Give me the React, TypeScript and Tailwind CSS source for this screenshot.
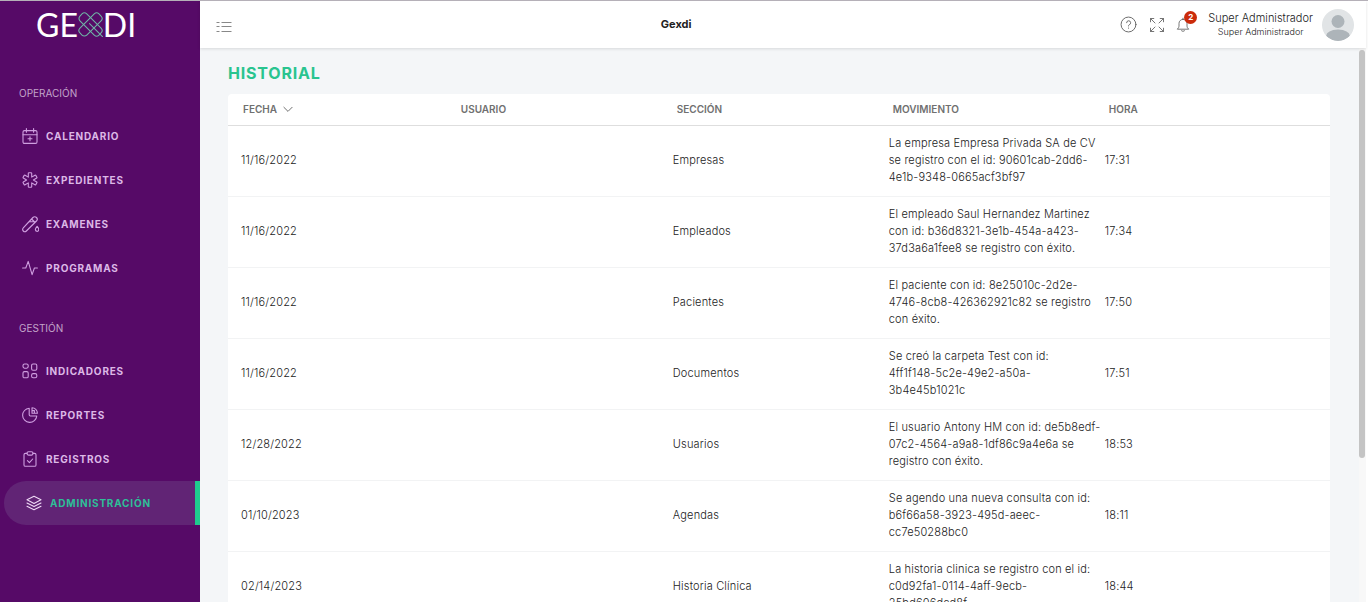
import { useState } from 'react'
import type { ReactNode } from 'react'
import clsx from 'clsx'

interface IconProps {
  children: ReactNode
  className?: string
}

function Icon({ children, className = 'size-4' }: IconProps) {
  return (
    <svg
      viewBox="0 0 16 16"
      fill="none"
      stroke="currentColor"
      strokeWidth="1.1"
      strokeLinecap="round"
      strokeLinejoin="round"
      className={clsx('shrink-0', className)}
      aria-hidden="true"
    >
      {children}
    </svg>
  )
}

const icons = {
  calendar: (
    <Icon>
      <rect x="1" y="2.6" width="14" height="12.8" rx="1.4" />
      <path d="M1 6.8h14M4.4.6v3.6M11.6.6v3.6M8 8.8v4M6 10.8h4" />
    </Icon>
  ),
  medical: (
    <Icon>
      <path d="M6.9.7h2.2q.6 0 .6.6v3.8l3.2-1.9q.6-.3.9.2l1.1 1.8q.3.5-.2.8L11.4 8l3.3 1.9q.5.3.2.8l-1.1 1.9q-.3.5-.9.2l-3.2-1.9v3.8q0 .6-.6.6H6.9q-.6 0-.6-.6v-3.8l-3.2 1.9q-.6.3-.9-.2l-1.1-1.8q-.3-.5.2-.8L4.6 8 1.3 6.1q-.5-.3-.2-.8l1.1-1.9q.3-.5.9-.2l3.2 1.9V1.3q0-.6.6-.6z" />
    </Icon>
  ),
  tube: (
    <Icon className="size-[17px]">
      <path d="M10.3 1.4 1.2 11.2a2 2 0 0 0 2.9 2.9l9.5-9.4a2.3 2.3 0 0 0-3.3-3.3zM9 2.8l3.1 3.1M6.8 5.4h5.6" />
      <path d="M14.2 9.8s-1.6 1.8-1.6 3a1.6 1.6 0 0 0 3.2 0c0-1.2-1.6-3-1.6-3z" />
    </Icon>
  ),
  pulse: (
    <Icon>
      <path d="M.6 8h3.2l2.4-6.6 3.9 13.2L12.4 8h3" />
    </Icon>
  ),
  grid: (
    <Icon>
      <rect x="1" y="1" width="5.2" height="4.2" rx="1.6" />
      <rect x="9.6" y="1" width="5.2" height="6.2" rx="1.4" />
      <rect x="1" y="8.6" width="5.2" height="6.2" rx="1.4" />
      <rect x="9.6" y="10.6" width="5.2" height="4.2" rx="1.6" />
    </Icon>
  ),
  pie: (
    <Icon>
      <path d="M7.2 1.2A7.1 7.1 0 1 0 14.8 9H8.4a1.2 1.2 0 0 1-1.2-1.2z" />
      <path d="M10 .8v5.4h5.4C15.4 3 13 .8 10 .8zM10 3.6h2.4v2.6" />
    </Icon>
  ),
  clipboard: (
    <Icon>
      <path d="M5 2.4H3.4A1.4 1.4 0 0 0 2 3.8v10.1a1.4 1.4 0 0 0 1.4 1.4h9.2a1.4 1.4 0 0 0 1.4-1.4V3.8a1.4 1.4 0 0 0-1.4-1.4H11" />
      <rect x="5" y=".7" width="6" height="3.4" rx="1.5" />
      <path d="m5.4 9.6 2 2 3.3-3.6" />
    </Icon>
  ),
  layers: (
    <Icon>
      <path d="M8 1.2 15 4.8 8 8.4 1 4.8z" />
      <path d="m1 8 7 3.6L15 8M1 11.2l7 3.6 7-3.6" />
    </Icon>
  ),
}

const menu = [
  {
    title: 'Operación',
    items: [
      { label: 'Calendario', icon: icons.calendar },
      { label: 'Expedientes', icon: icons.medical },
      { label: 'Examenes', icon: icons.tube },
      { label: 'Programas', icon: icons.pulse },
    ],
  },
  {
    title: 'Gestión',
    items: [
      { label: 'Indicadores', icon: icons.grid },
      { label: 'Reportes', icon: icons.pie },
      { label: 'Registros', icon: icons.clipboard },
      { label: 'Administración', icon: icons.layers },
    ],
  },
]

const rows = [
  {
    fecha: '11/16/2022',
    usuario: '',
    seccion: 'Empresas',
    movimiento:
      'La empresa Empresa Privada SA de CV se registro con el id: 90601cab-2dd6-4e1b-9348-0665acf3bf97',
    hora: '17:31',
  },
  {
    fecha: '11/16/2022',
    usuario: '',
    seccion: 'Empleados',
    movimiento:
      'El empleado Saul Hernandez Martinez con id: b36d8321-3e1b-454a-a423-37d3a6a1fee8 se registro con éxito.',
    hora: '17:34',
  },
  {
    fecha: '11/16/2022',
    usuario: '',
    seccion: 'Pacientes',
    movimiento:
      'El paciente con id: 8e25010c-2d2e-4746-8cb8-426362921c82 se registro con éxito.',
    hora: '17:50',
  },
  {
    fecha: '11/16/2022',
    usuario: '',
    seccion: 'Documentos',
    movimiento: 'Se creó la carpeta Test con id:\n4ff1f148-5c2e-49e2-a50a-3b4e45b1021c',
    hora: '17:51',
  },
  {
    fecha: '12/28/2022',
    usuario: '',
    seccion: 'Usuarios',
    movimiento:
      'El usuario Antony HM con id: de5b8edf-07c2-4564-a9a8-1df86c9a4e6a se registro con éxito.',
    hora: '18:53',
  },
  {
    fecha: '01/10/2023',
    usuario: '',
    seccion: 'Agendas',
    movimiento: 'Se agendo una nueva consulta con id: b6f66a58-3923-495d-aeec-cc7e50288bc0',
    hora: '18:11',
  },
  {
    fecha: '02/14/2023',
    usuario: '',
    seccion: 'Historia Clínica',
    movimiento:
      'La historia clinica se registro con el id: c0d92fa1-0114-4aff-9ecb-25bd606dcd8f',
    hora: '18:44',
  },
]

function Logo() {
  return (
    <a
      href="#inicio"
      aria-label="Gexdi"
      className="flex h-[47px] items-center pl-9 font-[Lato,sans-serif] text-[32px] leading-none text-white"
    >
      <span>GE</span>
      <svg
        viewBox="0 0 26 26"
        className="w-[25px]"
        fill="none"
        stroke="#6fb5a6"
        strokeWidth="1.1"
        strokeLinecap="round"
        aria-hidden="true"
      >
        <rect x="-1" y="8" width="28" height="10" rx="3.5" transform="rotate(-45 13 13)" />
        <rect x="-1" y="8" width="28" height="10" rx="3.5" transform="rotate(45 13 13)" />
        <path d="M12 12l13.5 13.5" />
      </svg>
      <span>DI</span>
    </a>
  )
}

function Sidebar() {
  const [active, setActive] = useState('Administración')

  return (
    <aside className="w-[200px] shrink-0 bg-[#560a67]">
      <Logo />
      <nav className="mt-[35px] flex flex-col gap-7">
        {menu.map(group => (
          <div key={group.title}>
            <h2 className="mb-[11px] pl-[19px] text-[10px] leading-5 text-[#c3a5ca] uppercase">
              {group.title}
            </h2>
            <ul>
              {group.items.map(item => {
                const isActive = item.label === active
                return (
                  <li key={item.label}>
                    <a
                      href="#menu"
                      onClick={() => setActive(item.label)}
                      className={clsx(
                        'flex h-11 items-center pl-[22px] text-[10px] font-bold tracking-[0.08em] uppercase',
                        isActive
                          ? 'ml-1 rounded-l-full border-r-[5px] border-[#1fcb8e] bg-[#612475] text-[#2ebf98]'
                          : 'text-[#dcb8e6]'
                      )}
                    >
                      <span
                        className={clsx(
                          'flex w-6 shrink-0',
                          isActive ? 'text-[#eed9f5]' : 'text-[#cf9fe0]'
                        )}
                      >
                        {item.icon}
                      </span>
                      {item.label}
                    </a>
                  </li>
                )
              })}
            </ul>
          </div>
        ))}
      </nav>
    </aside>
  )
}

function Header() {
  return (
    <header className="z-10 flex h-[47px] shrink-0 items-center justify-between bg-white pr-3 pl-4 shadow-[0_1px_3px_rgba(0,0,0,0.12)]">
      <button type="button" aria-label="Menú" className="pt-1 text-[#888]">
        <svg viewBox="0 0 16 16" className="size-4" stroke="currentColor" aria-hidden="true">
          <path d="M.5 3.5h3M5.5 3.5h10M.5 7.5h3M5.5 7.5h10M.5 12.5h3M5.5 12.5h10" />
        </svg>
      </button>
      <h1 className="text-[11px] font-bold text-[#222]">Gexdi</h1>
      <div className="flex items-center text-[#666]">
        <button type="button" aria-label="Ayuda" className="mr-3">
          <Icon className="size-[17px]">
            <circle cx="8" cy="8" r="7" strokeWidth=".9" />
            <path d="M6.2 6.3a1.9 1.9 0 1 1 2.5 1.9q-.7.3-.7 1.2M8 11.3v.2" strokeWidth=".9" />
          </Icon>
        </button>
        <button type="button" aria-label="Pantalla completa" className="mr-2.5">
          <Icon>
            <path
              d="M1.5 4.8V1.5h3.3M1.5 1.5 6 6M11.2 1.5h3.3v3.3M14.5 1.5 10 6M1.5 11.2v3.3h3.3M1.5 14.5 6 10M11.2 14.5h3.3v-3.3M14.5 14.5 10 10"
              strokeWidth=".9"
            />
          </Icon>
        </button>
        <button type="button" aria-label="Notificaciones" className="relative mr-[17px]">
          <Icon>
            <path
              d="M8 1.2v1.1M8 2.3a4 4 0 0 0-4 4v2.9q0 1.5-1.7 3h11.4Q12 10.7 12 9.2V6.3a4 4 0 0 0-4-4zM6.5 13.8q1.5 1.4 3 0"
              strokeWidth=".9"
            />
          </Icon>
          <span className="absolute -top-1.5 -right-1.5 flex size-[13px] items-center justify-center rounded-full bg-[#cb2b0b] text-[8px] font-bold text-white">
            2
          </span>
        </button>
        <div className="mr-[9px] text-center font-light text-[#222]">
          <p className="text-[11px] leading-[14px]">Super Administrador</p>
          <p className="text-[9px] leading-[13px]">Super Administrador</p>
        </div>
        <svg
          viewBox="0 0 32 32"
          className="size-8 shrink-0 rounded-full bg-[#e1e4e6]"
          role="img"
          aria-label="Perfil"
        >
          <circle cx="16" cy="12.5" r="6.5" fill="#adb4b9" />
          <path d="M4 27q1-6 12-6.5 11 .5 12 6.5-5 5-12 5T4 27z" fill="#adb4b9" />
        </svg>
      </div>
    </header>
  )
}

function HistoryTable() {
  return (
    <table className="w-full table-fixed rounded bg-white text-left">
      <colgroup>
        <col className="w-[20.4%]" />
        <col className="w-[19.6%]" />
        <col className="w-[19.6%]" />
        <col className="w-[19.6%]" />
        <col />
      </colgroup>
      <thead>
        <tr className="h-[31px] border-b border-[#dedede] text-[10px] text-[#707070] uppercase [&>th]:p-0 [&>th]:pl-2 [&>th]:font-semibold [&>th:first-child]:pl-[15px]">
          <th scope="col">
            <button type="button" className="flex items-center gap-1.5 font-semibold uppercase">
              Fecha
              <svg
                viewBox="0 0 10 10"
                className="size-2.5"
                fill="none"
                stroke="currentColor"
                aria-hidden="true"
              >
                <path d="M.6 3 5 7.4 9.4 3" />
              </svg>
            </button>
          </th>
          <th scope="col">Usuario</th>
          <th scope="col">Sección</th>
          <th scope="col">Movimiento</th>
          <th scope="col">Hora</th>
        </tr>
      </thead>
      <tbody className="text-[11px] leading-[17px] font-light tracking-[0.015em] text-[#222]">
        {rows.map(row => (
          <tr
            key={row.movimiento}
            className="border-b border-[#f2f3f4] [&>td]:pt-[9px] [&>td]:pb-2.5 [&>td]:pl-1 [&>td:first-child]:pl-[13px]"
          >
            <td>{row.fecha}</td>
            <td>{row.usuario}</td>
            <td>{row.seccion}</td>
            <td className="whitespace-pre-line">{row.movimiento}</td>
            <td>{row.hora}</td>
          </tr>
        ))}
      </tbody>
    </table>
  )
}

export default function App() {
  return (
    <div className="flex h-screen overflow-hidden border-t border-[#b5b0b8] bg-white pr-0.5 font-[Inter,sans-serif]">
      <Sidebar />
      <div className="flex min-w-0 flex-1 flex-col">
        <Header />
        <div className="flex min-h-0 flex-1 bg-[#f4f6f8]">
          <main className="min-w-0 flex-1 overflow-hidden pt-3 pr-[29px] pl-7">
            <h2 className="mb-2 text-base leading-[26px] font-bold tracking-wider text-[#29c48f] uppercase">
              Historial
            </h2>
            <HistoryTable />
          </main>
          {/* Scroll track */}
          <div className="w-[7px] shrink-0 bg-[#f8f8f8] pt-0.5" aria-hidden="true">
            <div className="h-[74%] w-1.5 rounded-full bg-[#c4c4c4]" />
          </div>
        </div>
      </div>
    </div>
  )
}
